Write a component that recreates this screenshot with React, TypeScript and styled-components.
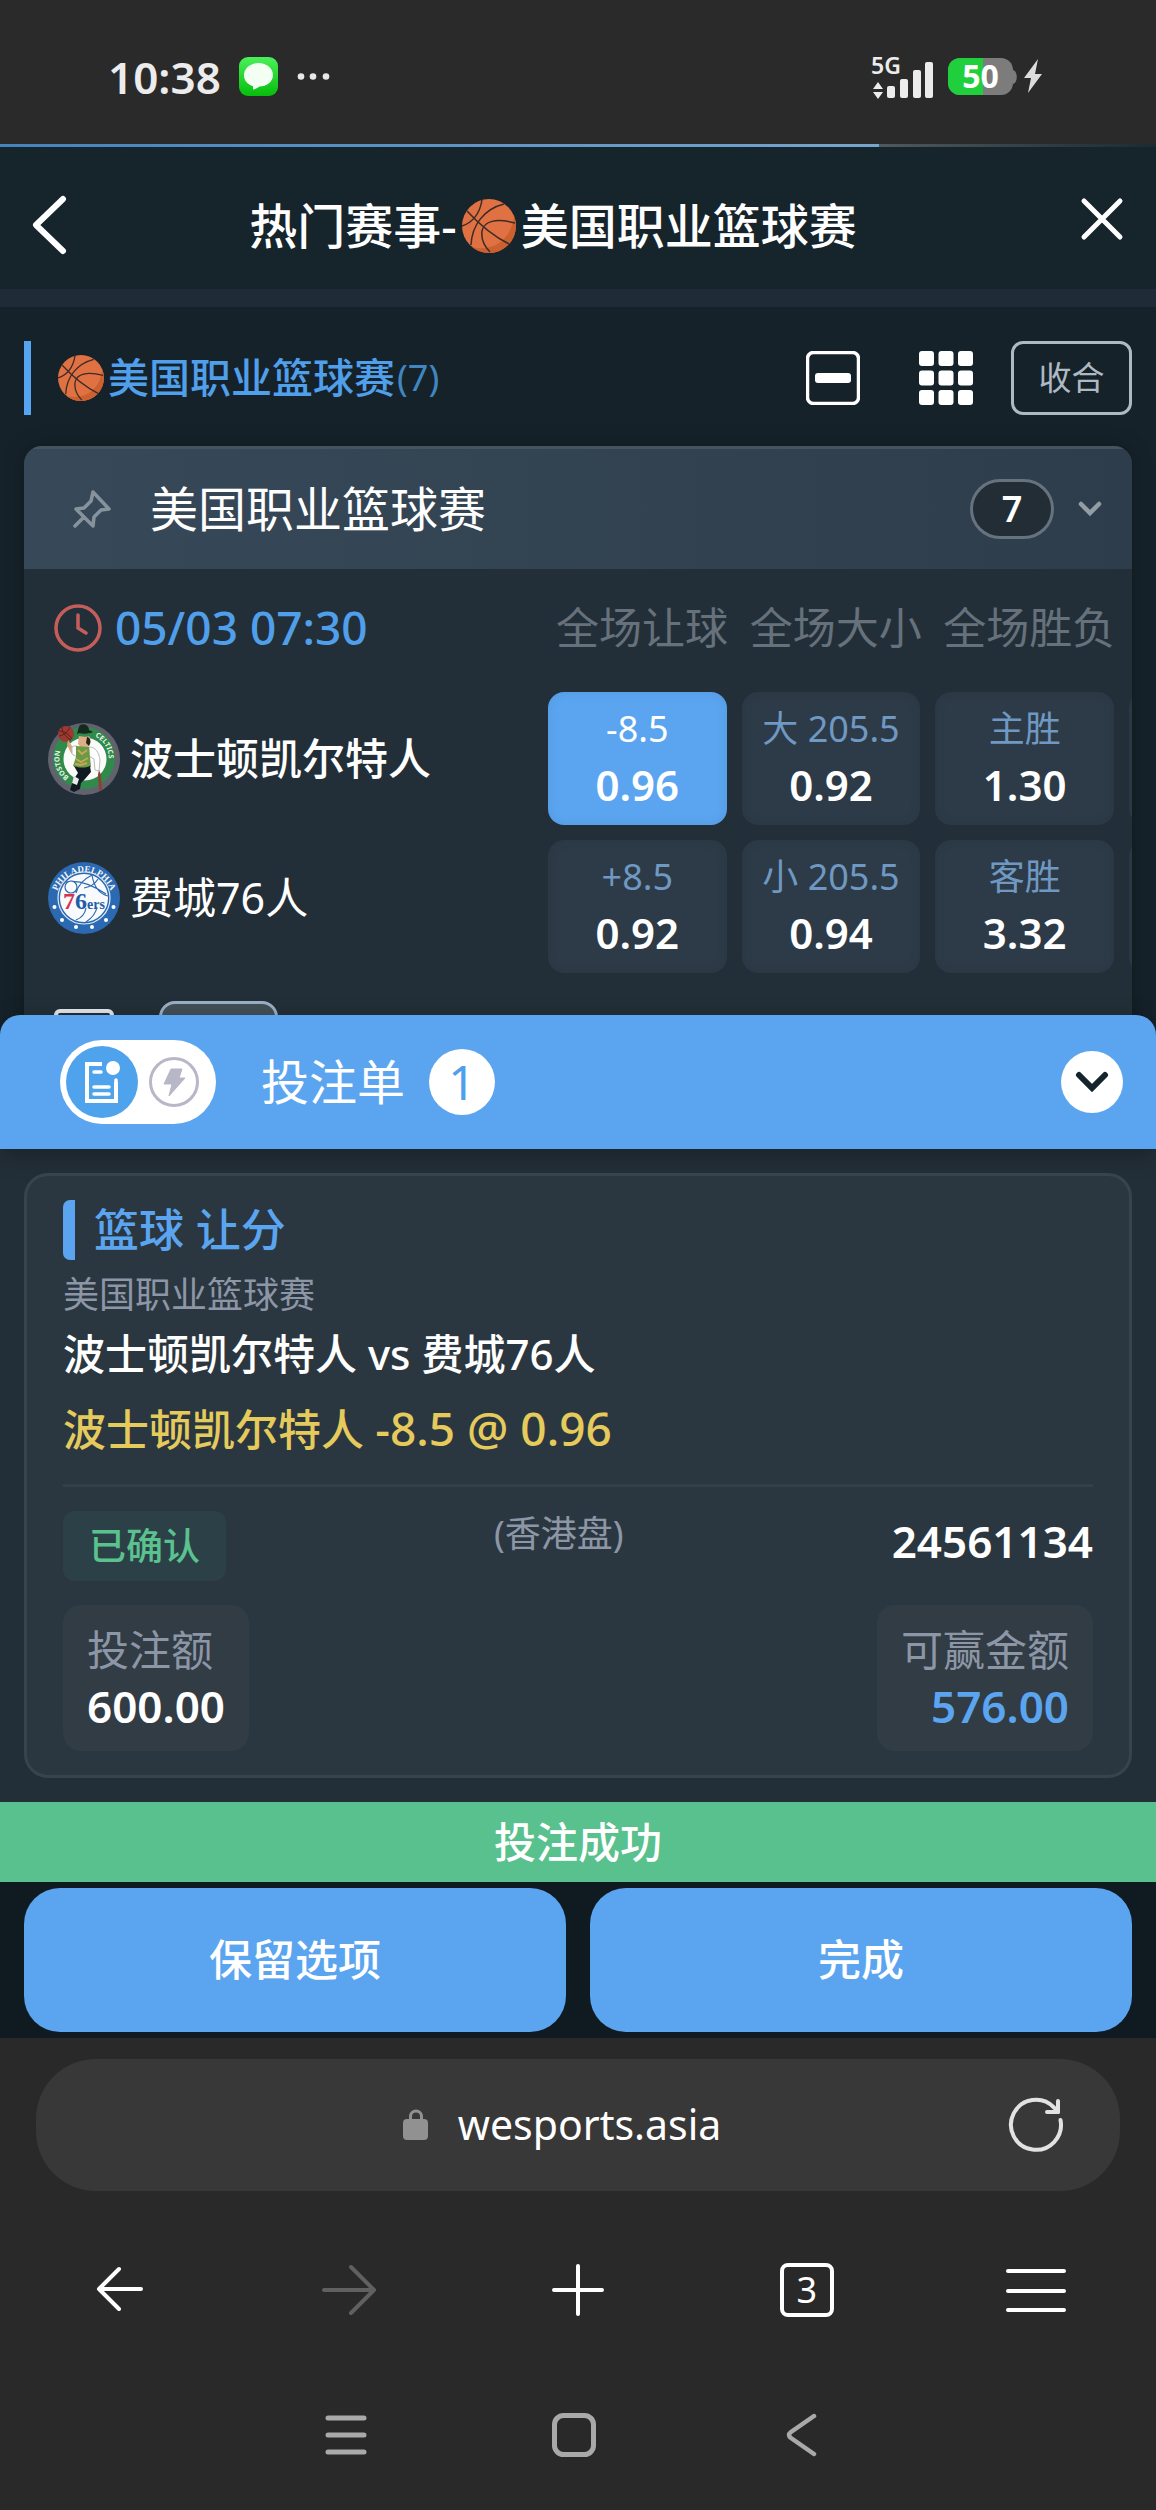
import React, { useState } from "react";
import styled, { createGlobalStyle } from "styled-components";

const GlobalStyle = createGlobalStyle`
  * {
    box-sizing: border-box;
  }
  body {
    margin: 0;
    background: #292929;
    color: #fff;
    font-family: "Noto Sans", "Noto Sans CJK SC", sans-serif;
    font-size: 42px;
    line-height: 1.2;
  }
  button {
    padding: 0;
    border: 0;
    background: none;
    color: inherit;
    font: inherit;
    cursor: pointer;
  }
  svg {
    display: block;
    flex: none;
  }
  h1, h2, h3, p {
    margin: 0;
    font-weight: 400;
  }
`;

const Ball = ({ size }: { size: number }) => (
  <svg width={size} height={size} viewBox="0 0 54 54" aria-hidden="true">
    <circle cx="27" cy="27" r="27" fill="#df7142" />
    <path d="M52 17a27 27 0 0 1-42 31c19 5 39-5 42-31z" fill="#cc602f" />
    <g fill="none" stroke="#3c2b27" strokeWidth="1.5">
      <path d="M5 12c12 13 26 25 42 33M20 1c-2 12-8 22-20 26M42 5C22 10 10 26 9 46M53 24c-19-5-31-2-33 8-1 8 2 15 8 21" />
    </g>
  </svg>
);

const CelticsLogo = () => (
  <svg width="72" height="72" viewBox="0 0 72 72" aria-hidden="true">
    <defs>
      <path id="celtics-left" d="M21 54A24 24 0 0 1 15 22" />
      <path id="celtics-right" d="M47 13.500A24 24 0 0 1 57 48" />
    </defs>
    <circle cx="36" cy="36" r="36" fill="#62626f" />
    <circle cx="36" cy="35" r="31" fill="#2f8a4c" />
    <circle cx="37" cy="36" r="21.500" fill="#fbfbf9" />
    <g fill="#e9f3e6" fontSize="7" fontWeight="700">
      <text><textPath href="#celtics-left">BOSTON</textPath></text>
      <text><textPath href="#celtics-right">CELTICS</textPath></text>
    </g>
    <circle cx="18" cy="11" r="8" fill="#9c3a31" />
    <path d="M11 8c5 0 10 3 13 8M14 4c0 5 3 10 9 13M11 13c5-1 9-4 11-9" fill="none" stroke="#5e211d" />
    <path d="M20 17l6 9 3 7-6-3-4-8z" fill="#d9a77f" />
    <path d="M24 24c3-2 6-1 7 1l-2 9-5-3z" fill="#fff" stroke="#b9bdba" />
    <path d="M31 12h10l2 7-3 6-6 1-4-5z" fill="#dcae88" />
    <path d="M32 2c5-2 9 1 9 5l4 2c-4 2-11 3-16 2 1-3 1-6 3-9z" fill="#142a1c" />
    <path d="M30 10c5 1 9 1 13 0v3c-4 1-8 1-12 0z" fill="#2f8a4c" />
    <path d="M39 14c4 1 4 5 2 9l-3-3z" fill="#24201e" />
    <path d="M41 24c7 0 10 6 11 13l-1 11-4-1-1-11-5-3z" fill="#fff" stroke="#b9bdba" />
    <path d="M28 23l13 1 2 20c-6 2-12 2-18-1l3-9z" fill="#6b9a45" />
    <path d="M30 27l4 4 5-4M28 36l5 3 7-4M27 41l6 1 6-2" stroke="#c5a75a" strokeWidth="2" fill="none" />
    <path d="M26 43c6 2 11 2 16 0l1 6-6 7-4 4-1 6-6 3-4-2 3-10 5-7z" fill="#111a22" />
    <path d="M26 53l5 3-2 6-5-2z" fill="#e7ece8" />
    <path d="M51 47l2 5 1 16-3-1-1-15z" fill="#8d3f35" />
  </svg>
);

const SixersLogo = () => (
  <svg width="72" height="72" viewBox="0 0 72 72" aria-hidden="true">
    <defs>
      <path id="sixers-arc" d="M8 38A28 28 0 0 1 64 38" />
    </defs>
    <circle cx="36" cy="36" r="36" fill="#2b69b2" />
    <circle cx="36" cy="36" r="26" fill="none" stroke="#dfe9f4" strokeWidth="1.200" />
    <circle cx="36" cy="36" r="24" fill="#f8fafc" />
    <g fill="none" stroke="#2b69b2" strokeWidth="1.200">
      <path d="M18 20c10-2 22 0 40 12M44 13c-8 4-14 10-16 18M60 34c-8-2-14-8-16-21M50 17c-3 5-8 8-14 9M38 60c6-4 10-9 11-15M28 58c5-2 9-6 10-12" />
      <circle cx="23" cy="25" r="6" fill="#f8fafc" />
    </g>
    <text fill="#f3f7fb" fontSize="9" fontWeight="700" fontFamily="Liberation Serif" textAnchor="middle">
      <textPath href="#sixers-arc" startOffset="50%">PHILADELPHIA</textPath>
    </text>
    <text x="15" y="47" fontFamily="Liberation Serif" fontWeight="700" fontSize="24" fill="#1f5da9">
      <tspan fill="#d8304f">7</tspan>6<tspan fontSize="14">ers</tspan>
    </text>
    <g fill="#fff">
      <circle cx="6.500" cy="45" r="2" />
      <circle cx="65.500" cy="45" r="2" />
      <circle cx="14" cy="58" r="2" />
      <circle cx="58" cy="58" r="2" />
      <circle cx="28" cy="65" r="2" />
      <circle cx="44" cy="65" r="2" />
    </g>
  </svg>
);

type Price = { label: string; value: string };

const markets = ["全场让球", "全场大小", "全场胜负"];

const prices: Price[][] = [
  [
    { label: "-8.5", value: "0.96" },
    { label: "大 205.5", value: "0.92" },
    { label: "主胜", value: "1.30" },
  ],
  [
    { label: "+8.5", value: "0.92" },
    { label: "小 205.5", value: "0.94" },
    { label: "客胜", value: "3.32" },
  ],
];

const StatusBar = () => (
  <Status>
    <Clock>10:38</Clock>
    <svg width="92" height="40" viewBox="0 0 92 40" aria-hidden="true">
      <defs>
        <linearGradient id="msg" x1="0" y1="0" x2="0" y2="1">
          <stop offset="0" stopColor="#4bf05a" />
          <stop offset="1" stopColor="#06bd0c" />
        </linearGradient>
      </defs>
      <rect width="39" height="39" rx="9" fill="url(#msg)" />
      <path d="M19.500 6C11.500 6 5 11.300 5 18c0 6 4 9.500 9 11.200V32.500c3-.6 5-1.600 6.500-3C28 29.500 34 24.600 34 18 34 11.300 27.500 6 19.500 6z" fill="#f4fff3" />
      <g fill="#e8e8e8">
        <circle cx="62" cy="19.500" r="3.300" />
        <circle cx="74" cy="19.500" r="3.300" />
        <circle cx="87" cy="19.500" r="3.300" />
      </g>
    </svg>
    <Spacer />
    <svg width="64" height="64" viewBox="0 -10 64 64" aria-label="5G">
      <text x="0" y="19" fontSize="23" fontWeight="600" fill="#ececec">5G</text>
      <g fill="#ececec">
        <path d="M7 27l5 7H2zM7 44l5-7H2z" />
        <rect x="16" y="31" width="8" height="12" rx="2" />
        <rect x="29" y="24" width="8" height="19" rx="2" />
        <rect x="42" y="15" width="8" height="28" rx="2" />
        <rect x="54" y="7" width="8" height="36" rx="2" />
      </g>
    </svg>
    <svg width="96" height="58" viewBox="0 -10 96 58" aria-hidden="true">
      <rect width="65" height="37" rx="12" fill="#7c7c7c" />
      <path d="M65 12c5 1 5 13 0 14z" fill="#7c7c7c" />
      <path d="M12 0h23v37H12A12 12 0 0 1 0 25V12A12 12 0 0 1 12 0z" fill="#20cf3c" />
      <text x="32.500" y="30" textAnchor="middle" fontSize="32" fontWeight="700" fill="#fff">50</text>
      <path d="M90 1L76 20h7l-3 15 14-19h-7z" fill="#dcdcdc" />
    </svg>
  </Status>
);

const EventList = () => (
  <Events>
    <LeagueBar>
      <LeagueMark />
      <LeagueName>
        <Ball size={46} />
        美国职业篮球赛<small>(7)</small>
      </LeagueName>
      <Spacer />
      <IconButton aria-label="收起">
        <svg width="54" height="54" viewBox="0 0 54 54">
          <rect x="1.500" y="1.500" width="51" height="51" rx="6" fill="none" stroke="#fff" strokeWidth="3.500" />
          <rect x="9" y="22" width="36" height="10" rx="3" fill="#fff" />
        </svg>
      </IconButton>
      <IconButton aria-label="网格">
        <svg width="54" height="54" viewBox="0 0 54 54" fill="#fff">
          {[0, 19.5, 39].map((y) =>
            [0, 19.5, 39].map((x) => <rect key={`${x}-${y}`} x={x} y={y} width="15" height="15" rx="3" />)
          )}
        </svg>
      </IconButton>
      <FoldButton>收合</FoldButton>
    </LeagueBar>

    <Panel>
      <PanelHead>
        <svg width="40" height="40" viewBox="0 0 40 40" fill="none" stroke="#87939c" strokeWidth="3.500" strokeLinejoin="round" strokeLinecap="round">
          <path d="M21 3l16 17-8 1-7 7-1 9L4 20l8-1 7-7zM12 28L3 37" />
        </svg>
        <h2>美国职业篮球赛</h2>
        <Spacer />
        <Count>7</Count>
        <svg width="24" height="16" viewBox="0 0 24 16" fill="none" stroke="#939da5" strokeWidth="4.500" strokeLinecap="round">
          <path d="M3 3l9 9 9-9" />
        </svg>
      </PanelHead>

      <MarketRow>
        <Kickoff>
          <svg width="48" height="48" viewBox="0 0 48 48" fill="none" stroke="#c55e5b" strokeWidth="3.500" strokeLinecap="round">
            <circle cx="24" cy="24" r="22" />
            <path d="M24 11v13l8 5" />
          </svg>
          <time>05/03 07:30</time>
        </Kickoff>
        <OddsGrid>
          {markets.map((name) => (
            <MarketName key={name}>{name}</MarketName>
          ))}
        </OddsGrid>
      </MarketRow>

      <MatchRow>
        <Teams>
          <Team $strong>
            <CelticsLogo />
            波士顿凯尔特人
          </Team>
          <Team>
            <SixersLogo />
            费城76人
          </Team>
        </Teams>
        <OddsRows>
          {prices.map((row, i) => (
            <OddsGrid key={i}>
              {row.map((p, j) => (
                <Odds key={p.label} $active={i === 0 && j === 0}>
                  <span>{p.label}</span>
                  <strong>{p.value}</strong>
                </Odds>
              ))}
              <Odds aria-label="更多" />
            </OddsGrid>
          ))}
        </OddsRows>
      </MatchRow>

      <MatchFoot>
        <StatsButton aria-label="数据" />
        <MoreButton aria-label="更多玩法" />
      </MatchFoot>
    </Panel>
  </Events>
);

const BetSlip = () => {
  const [quick, setQuick] = useState(false);

  return (
    <Slip>
      <SlipHead>
        <Toggle>
          <ToggleButton $on={!quick} aria-label="投注单" onClick={() => setQuick(false)}>
            <svg width="38" height="44" viewBox="0 0 38 44" fill="none" stroke="#fff" strokeWidth="4" strokeLinecap="round">
              <path d="M19 4H4v37h29V22" strokeLinecap="butt" />
              <path d="M33 22v-2M11 12h7M11 27h15M11 34h15" strokeWidth="3.500" />
              <circle cx="30" cy="8" r="7" fill="#fff" stroke="none" />
            </svg>
          </ToggleButton>
          <ToggleButton $on={quick} aria-label="快速投注" onClick={() => setQuick(true)}>
            <svg width="52" height="52" viewBox="0 0 52 52">
              <circle cx="26" cy="26" r="23.500" fill="none" stroke="#b8b7c8" strokeWidth="3" />
              <path d="M23 13h11l-3 9h6L21 40l3-12h-8z" fill="#b8b7c8" stroke="#b8b7c8" strokeLinejoin="round" />
            </svg>
          </ToggleButton>
        </Toggle>
        <h2>投注单</h2>
        <SlipCount>1</SlipCount>
        <Spacer />
        <CollapseButton aria-label="收起投注单">
          <svg width="34" height="22" viewBox="0 0 34 22" fill="none" stroke="#16242b" strokeWidth="6" strokeLinecap="round">
            <path d="M4 4l13 13L30 4" />
          </svg>
        </CollapseButton>
      </SlipHead>

      <Ticket>
        <TicketTitle>篮球 让分</TicketTitle>
        <TicketLeague>美国职业篮球赛</TicketLeague>
        <TicketMatch>波士顿凯尔特人 vs 费城76人</TicketMatch>
        <TicketPick>
          波士顿凯尔特人 <span>-8.5 @ 0.96</span>
        </TicketPick>
        <TicketStatus>
          <Confirmed>已确认</Confirmed>
          <OddsType>(香港盘)</OddsType>
          <TicketNo>24561134</TicketNo>
        </TicketStatus>
        <Amounts>
          <Amount>
            <span>投注额</span>
            <strong>600.00</strong>
          </Amount>
          <Amount $win>
            <span>可赢金额</span>
            <strong>576.00</strong>
          </Amount>
        </Amounts>
      </Ticket>

      <Success role="status">投注成功</Success>
      <Actions>
        <ActionButton>保留选项</ActionButton>
        <ActionButton>完成</ActionButton>
      </Actions>
    </Slip>
  );
};

const BrowserBar = () => (
  <Browser>
    <AddressBar>
      <Address>
        <svg width="26" height="32" viewBox="0 0 26 32">
          <path d="M7.500 12V7.500a5.500 5.500 0 0 1 11 0V12" fill="none" stroke="#919191" strokeWidth="3" />
          <rect y="10" width="25" height="21" rx="4" fill="#919191" />
        </svg>
        wesports.asia
      </Address>
      <ReloadButton aria-label="刷新">
        <svg width="56" height="56" viewBox="0 0 56 56" fill="none" stroke="#e2e2e2" strokeWidth="4" strokeLinecap="round">
          <path d="M52.500 23A25 25 0 1 1 46 10.500L50 15" />
          <path d="M50 4v11H39" strokeLinejoin="round" />
        </svg>
      </ReloadButton>
    </AddressBar>

    <Tools>
      <button aria-label="后退">
        <svg width="54" height="54" viewBox="0 0 54 54" fill="none" stroke="#fff" strokeWidth="4" strokeLinecap="round" strokeLinejoin="round">
          <path d="M26 6L6 26l20 20M6 26h42" />
        </svg>
      </button>
      <button aria-label="前进" disabled>
        <svg width="54" height="54" viewBox="0 0 54 54" fill="none" stroke="#606060" strokeWidth="4" strokeLinecap="round" strokeLinejoin="round">
          <path d="M29 4l23 23-23 23M52 27H2" />
        </svg>
      </button>
      <button aria-label="新建标签页">
        <svg width="54" height="54" viewBox="0 0 54 54" stroke="#fff" strokeWidth="4" strokeLinecap="round">
          <path d="M27 3v48M3 27h48" />
        </svg>
      </button>
      <TabCount>3</TabCount>
      <button aria-label="菜单">
        <svg width="60" height="54" viewBox="0 0 60 54" stroke="#fff" strokeWidth="4" strokeLinecap="round">
          <path d="M2 8h56M2 28h56M2 47h56" />
        </svg>
      </button>
    </Tools>

    <SystemNav>
      <button aria-label="最近任务">
        <svg width="44" height="44" viewBox="0 0 44 44" stroke="#a9a9a9" strokeWidth="5" strokeLinecap="round">
          <path d="M4 5h36M4 22h36M4 39h36" />
        </svg>
      </button>
      <button aria-label="主屏幕">
        <svg width="44" height="44" viewBox="0 0 44 44" fill="none" stroke="#a9a9a9" strokeWidth="5">
          <rect x="2.500" y="2.500" width="39" height="39" rx="9" />
        </svg>
      </button>
      <button aria-label="返回">
        <svg width="44" height="44" viewBox="0 0 44 44" fill="none" stroke="#a9a9a9" strokeWidth="4.500" strokeLinecap="round">
          <path d="M34 3L11 19q-4 3 0 6l23 16" />
        </svg>
      </button>
    </SystemNav>
  </Browser>
);

const App = () => {
  return (
    <Page>
      <GlobalStyle />
      <StatusBar />
      <LoadTrack>
        <LoadBar />
      </LoadTrack>
      <TopBar>
        <button aria-label="返回">
          <svg width="36" height="60" viewBox="0 0 36 60" fill="none" stroke="#fff" strokeWidth="6" strokeLinecap="round" strokeLinejoin="round">
            <path d="M31 4L4 30l27 26" />
          </svg>
        </button>
        <h1>
          热门赛事-
          <Ball size={54} />
          美国职业篮球赛
        </h1>
        <CloseButton aria-label="关闭">
          <svg width="44" height="44" viewBox="0 0 44 44" stroke="#fff" strokeWidth="5" strokeLinecap="round">
            <path d="M4 4l36 36M40 4L4 40" />
          </svg>
        </CloseButton>
      </TopBar>
      <EventList />
      <BetSlip />
      <BrowserBar />
    </Page>
  );
};

const Page = styled.div`
  min-height: 100vh;
  display: flex;
  flex-direction: column;
`;

const Spacer = styled.span`
  flex: 1;
`;

const Status = styled.header`
  height: 144px;
  padding: 10px 112px 0 108px;
  display: flex;
  align-items: center;
  background: #2a2a2a;
  svg + svg {
    margin-left: 13px;
  }
`;

const Clock = styled.time`
  margin-right: 18px;
  font-size: 44px;
  font-weight: 600;
  color: #ececec;
`;

const LoadTrack = styled.div`
  height: 3px;
  background: linear-gradient(90deg, #5a6568 70%, #1c2b31);
`;

const LoadBar = styled.div`
  width: 76%;
  height: 3px;
  background: linear-gradient(90deg, #4583bd, #77a5cc);
`;

const TopBar = styled.header`
  height: 160px;
  padding: 16px 32px 0;
  display: flex;
  align-items: flex-start;
  background: #16242b;
  border-bottom: 18px solid #1f2b37;
  button {
    margin-top: 32px;
  }
  h1 {
    flex: 1;
    padding-right: 42px;
    display: flex;
    align-items: center;
    justify-content: center;
    font-size: 48px;
    font-weight: 500;
    line-height: 126px;
  }
  h1 svg {
    margin: 0 5px;
  }
`;

const CloseButton = styled.button`
  padding-top: 2px;
`;

const Events = styled.main`
  padding: 34px 24px 0;
  background: #16222a;
`;

const LeagueBar = styled.div`
  height: 74px;
  margin-bottom: 31px;
  display: flex;
  align-items: center;
`;

const LeagueMark = styled.span`
  width: 7px;
  height: 100%;
  margin-right: 27px;
  background: #55a5f3;
`;

const LeagueName = styled.h2`
  display: flex;
  align-items: center;
  font-size: 41px;
  font-weight: 500;
  color: #509fea;
  svg {
    margin-right: 4px;
  }
  small {
    margin-left: 2px;
    font-size: 36px;
    font-weight: 400;
    color: #4186bf;
  }
`;

const IconButton = styled.button`
  margin-right: 59px;
  & + & {
    margin-right: 38px;
  }
`;

const FoldButton = styled.button`
  width: 121px;
  height: 74px;
  border: 3px solid #aeb9c3;
  border-radius: 12px;
  font-size: 33px;
  color: #aeb9c3;
`;

const Panel = styled.section`
  overflow: hidden;
  border-radius: 18px 18px 0 0;
  background: #232f38;
  box-shadow: 0 0 20px rgba(0, 0, 0, 0.3);
`;

const PanelHead = styled.header`
  height: 123px;
  padding: 0 30px 0 48px;
  display: flex;
  align-items: center;
  background: linear-gradient(90deg, #374959, #2e3d4b);
  border-top: 3px solid #45545f;
  h2 {
    margin-left: 38px;
    font-size: 48px;
  }
`;

const Count = styled.span`
  width: 84px;
  height: 60px;
  margin-right: 24px;
  border: 3px solid #66737f;
  border-radius: 30px;
  background: #222d36;
  font-size: 36px;
  font-weight: 600;
  line-height: 54px;
  text-align: center;
`;

const MatchRow = styled.div`
  display: grid;
  grid-template-columns: 524fr 584fr;
`;

const MarketRow = styled(MatchRow)`
  height: 123px;
  padding-bottom: 5px;
  align-items: center;
`;

const Kickoff = styled.div`
  padding-left: 30px;
  display: flex;
  align-items: center;
  gap: 13px;
  font-size: 46px;
  font-weight: 500;
  color: #509fea;
`;

const OddsGrid = styled.div`
  min-width: 0;
  overflow: hidden;
  display: grid;
  grid-auto-flow: column;
  grid-auto-columns: calc((100% - 48px) / 3);
  gap: 15px;
`;

const MarketName = styled.span`
  padding-left: 8px;
  font-size: 43px;
  white-space: nowrap;
  color: #66717b;
`;

const Teams = styled.div`
  padding: 31px 0 0 24px;
  display: flex;
  flex-direction: column;
  gap: 67px;
`;

const Team = styled.div<{ $strong?: boolean }>`
  height: 72px;
  display: flex;
  align-items: center;
  gap: 10px;
  font-size: 43px;
  font-weight: ${({ $strong }) => ($strong ? 500 : 400)};
`;

const OddsRows = styled.div`
  min-width: 0;
  display: grid;
  gap: 15px;
`;

const Odds = styled.button<{ $active?: boolean }>`
  height: 133px;
  padding-bottom: 4px;
  display: flex;
  flex-direction: column;
  align-items: center;
  justify-content: center;
  border-radius: 16px;
  background: ${({ $active }) => ($active ? "#5ba5f0" : "#2d3b48")};
  box-shadow: inset 0 0 12px rgba(0, 0, 0, 0.08);
  line-height: 56px;
  white-space: nowrap;
  span {
    font-size: 36px;
    color: ${({ $active }) => ($active ? "#fff" : "#6f98c2")};
  }
  strong {
    font-size: 42px;
    font-weight: 600;
  }
`;

const MatchFoot = styled.footer`
  padding: 28px 30px 0;
  display: flex;
  align-items: center;
  gap: 45px;
`;

const StatsButton = styled.button`
  width: 60px;
  height: 44px;
  border: 4px solid #e6e9eb;
  border-radius: 6px;
`;

const MoreButton = styled.button`
  width: 119px;
  height: 60px;
  border: 3px solid #9bb0c6;
  border-radius: 16px;
  background: #434f58;
`;

/* the slip slides over the last row of the list */
const Slip = styled.section`
  position: relative;
  margin-top: -46px;
  border-radius: 20px 20px 0 0;
  background: #232f38;
`;

const SlipHead = styled.header`
  height: 134px;
  padding: 0 33px 0 60px;
  display: flex;
  align-items: center;
  border-radius: 20px 20px 0 0;
  background: #5ba5f0;
  box-shadow: 0 6px 24px rgba(0, 0, 0, 0.3);
  h2 {
    margin: 0 24px 0 45px;
    font-size: 48px;
  }
`;

const Toggle = styled.div`
  padding: 6px;
  display: flex;
  border-radius: 42px;
  background: #fff;
`;

const ToggleButton = styled.button<{ $on: boolean }>`
  width: 72px;
  height: 72px;
  display: grid;
  place-items: center;
  border-radius: 50%;
  background: ${({ $on }) => ($on ? "#4fa3ec" : "none")};
`;

const SlipCount = styled.span`
  width: 66px;
  height: 66px;
  border-radius: 50%;
  background: #fff;
  font-size: 48px;
  line-height: 66px;
  text-align: center;
  color: #4f9fee;
`;

const CollapseButton = styled.button`
  width: 62px;
  height: 62px;
  display: grid;
  place-items: center;
  border-radius: 50%;
  background: #fff;
`;

const Ticket = styled.article`
  margin: 24px;
  padding: 24px 36px;
  border: 3px solid #38434c;
  border-radius: 24px;
  background: #2b3740;
`;

const TicketTitle = styled.h3`
  padding-left: 19px;
  border-left: 12px solid #5ba5f0;
  border-radius: 7px 0 0 7px;
  font-size: 45px;
  font-weight: 500;
  line-height: 60px;
  color: #5ba5f0;
`;

const TicketLeague = styled.p`
  margin-top: 9px;
  font-size: 36px;
  line-height: 52px;
  color: #8d96a6;
`;

const TicketMatch = styled.p`
  font-size: 42px;
  font-weight: 500;
  line-height: 66px;
`;

const TicketPick = styled.p`
  padding: 12px 0 24px;
  border-bottom: 3px solid #343f48;
  font-size: 43px;
  font-weight: 500;
  line-height: 61px;
  color: #e5ca5c;
  span {
    font-size: 46px;
    line-height: 1;
  }
`;

const TicketStatus = styled.div`
  padding: 24px 0;
  display: flex;
  align-items: flex-start;
  justify-content: space-between;
`;

const Confirmed = styled.span`
  padding: 0 26px;
  border-radius: 12px;
  background: #2c4147;
  font-size: 37px;
  font-weight: 500;
  line-height: 70px;
  color: #5bc28f;
`;

const OddsType = styled.span`
  font-size: 36px;
  line-height: 46px;
  color: #8d96a6;
`;

const TicketNo = styled.span`
  font-size: 44px;
  font-weight: 600;
  line-height: 60px;
`;

const Amounts = styled.div`
  display: flex;
  justify-content: space-between;
`;

const Amount = styled.div<{ $win?: boolean }>`
  padding: 17px 24px;
  display: flex;
  flex-direction: column;
  align-items: ${({ $win }) => ($win ? "flex-end" : "flex-start")};
  border-radius: 18px;
  background: #313c45;
  line-height: 56px;
  span {
    color: #8d96a6;
  }
  strong {
    font-size: 44px;
    font-weight: 600;
    color: ${({ $win }) => ($win ? "#5ba5f0" : "#fff")};
  }
`;

const Success = styled.p`
  background: #59c18e;
  font-weight: 500;
  line-height: 80px;
  text-align: center;
`;

const Actions = styled.div`
  padding: 6px 24px;
  display: grid;
  grid-template-columns: 1fr 1fr;
  gap: 24px;
  background: #0f1b20;
`;

const ActionButton = styled.button`
  height: 144px;
  border-radius: 36px;
  background: #5ba5f0;
  font-size: 43px;
  font-weight: 500;
`;

const Browser = styled.footer`
  flex: 1;
  padding-top: 21px;
  background: #292929;
`;

const AddressBar = styled.div`
  height: 132px;
  margin: 0 36px;
  padding: 0 56px;
  display: grid;
  grid-template-columns: 24px 1fr 56px;
  align-items: center;
  border-radius: 60px;
  background: #383838;
`;

const Address = styled.button`
  grid-column: 2;
  display: flex;
  align-items: center;
  justify-content: center;
  gap: 29px;
  font-size: 41px;
`;

const ReloadButton = styled.button`
  justify-self: end;
`;

const Tools = styled.nav`
  padding: 72px 6px 0;
  display: grid;
  grid-template-columns: repeat(5, 1fr);
  justify-items: center;
`;

const TabCount = styled.button`
  width: 54px;
  height: 54px;
  border: 4px solid #fff;
  border-radius: 8px;
  font-size: 36px;
  line-height: 46px;
`;

const SystemNav = styled.nav`
  padding: 96px 8px 0 0;
  display: flex;
  justify-content: center;
  gap: 184px;
`;

export default App;
